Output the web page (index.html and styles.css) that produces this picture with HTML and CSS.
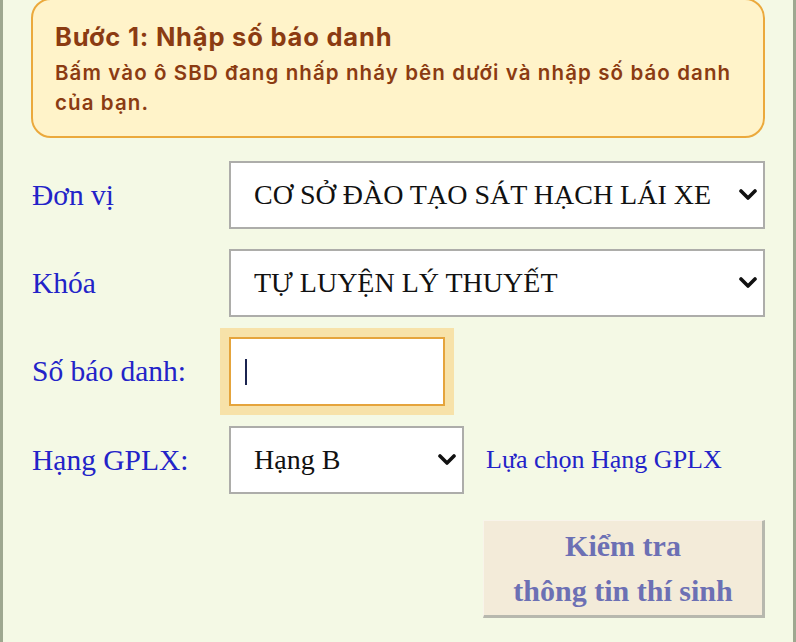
FILE: index.html
```html
<!DOCTYPE html>
<html lang="vi">
<head>
<meta charset="utf-8">
<title>Nhập số báo danh</title>
<link rel="stylesheet" href="styles.css">
</head>
<body>
<div class="page">
  <div class="notice">
    <div class="notice-title">Bước 1: Nhập số báo danh</div>
    <div class="notice-text">Bấm vào ô SBD đang nhấp nháy bên dưới và nhập số báo danh của bạn.</div>
  </div>

  <form class="form">
    <label class="label">Đơn vị</label>
    <div class="select wide">
      <span class="select-value">CƠ SỞ ĐÀO TẠO SÁT HẠCH LÁI XE</span>
      <svg class="chev" viewBox="0 0 18 12" width="18" height="12"><path d="M2 2 L9 9 L16 2" fill="none" stroke="#111" stroke-width="3.6" stroke-linecap="round" stroke-linejoin="round"/></svg>
    </div>

    <label class="label">Khóa</label>
    <div class="select wide">
      <span class="select-value">TỰ LUYỆN LÝ THUYẾT</span>
      <svg class="chev" viewBox="0 0 18 12" width="18" height="12"><path d="M2 2 L9 9 L16 2" fill="none" stroke="#111" stroke-width="3.6" stroke-linecap="round" stroke-linejoin="round"/></svg>
    </div>

    <label class="label">Số báo danh:</label>
    <div class="field">
      <div class="input"><span class="caret"></span></div>
    </div>

    <label class="label">Hạng GPLX:</label>
    <div class="field-row">
      <div class="select small">
        <span class="select-value">Hạng B</span>
        <svg class="chev" viewBox="0 0 18 12" width="18" height="12"><path d="M2 2 L9 9 L16 2" fill="none" stroke="#111" stroke-width="3.6" stroke-linecap="round" stroke-linejoin="round"/></svg>
      </div>
      <span class="link">Lựa chọn Hạng GPLX</span>
    </div>

    <div class="spacer"></div>
    <div class="actions">
      <button type="button" class="btn">Kiểm tra<br>thông tin thí sinh</button>
    </div>
  </form>
</div>
</body>
</html>
```
FILE: styles.css
```css
html, body {
  margin: 0;
  padding: 0;
}
body {
  background: #f4f9e5;
  font-family: "Liberation Serif", "Times New Roman", serif;
}
.page {
  width: 796px;
  height: 642px;
  border-left: 3px solid #9ea890;
  border-right: 3px solid #9ea890;
  padding: 0 28px;
  box-sizing: border-box;
  overflow: hidden;
}
.notice {
  margin-top: -2px;
  background: #fff3c9;
  border: 2px solid #eba93c;
  border-radius: 20px;
  padding: 21px 22px 18px 22px;
  color: #8b3b12;
  font-family: "Inter", "Open Sans", sans-serif;
}
.notice-title {
  font-weight: 700;
  font-size: 25.5px;
  line-height: 32px;
  letter-spacing: 0.8px;
}
.notice-text {
  font-weight: 600;
  font-size: 20.5px;
  line-height: 30px;
  letter-spacing: 1.1px;
  margin-top: 5px;
}
.form {
  display: grid;
  grid-template-columns: 198px 1fr;
  row-gap: 20px;
  align-items: center;
  margin-top: 23px;
}
.label {
  color: #2323c8;
  font-size: 29.5px;
  padding-left: 1px;
}
.select {
  display: flex;
  align-items: center;
  justify-content: space-between;
  height: 68px;
  box-sizing: border-box;
  background: #fff;
  border: 2px solid #adadaa;
  padding: 0 6px 0 23px;
  font-size: 28px;
  color: #111;
}
.select.small {
  width: 235px;
}
.chev {
  display: block;
  flex: none;
}
.field {
  display: flex;
}
.input {
  width: 216px;
  height: 69px;
  box-sizing: border-box;
  background: #fff;
  border: 2px solid #e5a43c;
  box-shadow: 0 0 0 9px #f7e2a9;
  display: flex;
  align-items: center;
  padding-left: 14px;
}
.caret {
  display: block;
  width: 2px;
  height: 26px;
  background: #1b2450;
}
.field-row {
  display: flex;
  align-items: center;
  gap: 22px;
}
.link {
  color: #2323c8;
  font-size: 26px;
}
.spacer {
  height: 0;
}
.actions {
  display: flex;
  justify-content: flex-end;
  margin-top: 6px;
}
.btn {
  width: 282px;
  height: 98px;
  box-sizing: border-box;
  background: #f3ebd9;
  border: none;
  border-top: 1px solid #f8f4ea;
  border-left: 1px solid #f8f4ea;
  border-right: 3px solid #b7b8ae;
  border-bottom: 3px solid #b7b8ae;
  font-family: "Liberation Serif", "Times New Roman", serif;
  font-weight: 700;
  font-size: 30px;
  line-height: 45px;
  color: #6c70b4;
  padding: 0;
}
```
